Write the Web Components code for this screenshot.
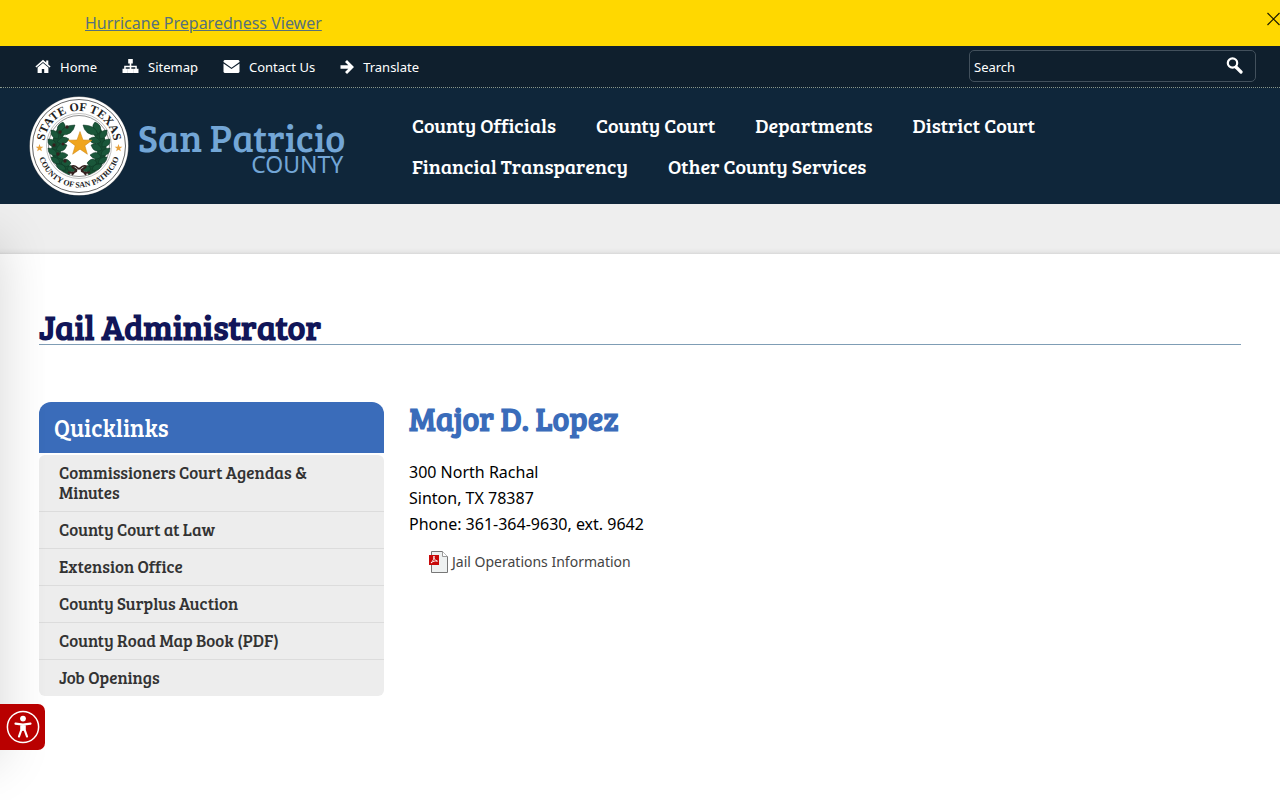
<!DOCTYPE html>
<html lang="en">
<head>
<meta charset="utf-8">
<meta name="viewport" content="width=device-width, initial-scale=1">
<title>Jail Administrator</title>
<style>
  :root {
    --navy: #0f263a;
    --navy-dark: #0f1f2d;
    --blue: #3a6cba;
    --sky: #73a6d6;
    --gray: #ededed;
    --slab: "Bree Serif", "Liberation Serif", serif;
  }
  body {
    margin: 0;
    overflow-x: hidden;
    font: 16px/26px "Segoe UI", "Noto Sans", sans-serif;
    color: #000;
    background: #fff;
  }
</style>
</head>
<body>
<alert-bar href="#viewer">Hurricane Preparedness Viewer</alert-bar>
<utility-bar></utility-bar>
<site-header>
  <nav-link href="#officials">County Officials</nav-link>
  <nav-link href="#court">County Court</nav-link>
  <nav-link href="#departments">Departments</nav-link>
  <nav-link href="#district">District Court</nav-link>
  <nav-link href="#finance">Financial Transparency</nav-link>
  <nav-link href="#services">Other County Services</nav-link>
</site-header>
<page-content>
  <span slot="title">Jail Administrator</span>
  <quick-links slot="side"></quick-links>
  <contact-card name="Major D. Lopez">
    300 North Rachal<br>
    Sinton, TX 78387<br>
    Phone: 361-364-9630, ext. 9642
    <pdf-link slot="files" href="#operations">Jail Operations Information</pdf-link>
  </contact-card>
</page-content>
<access-widget></access-widget>

<script>
class AlertBar extends HTMLElement {
  constructor() {
    super();
    this.attachShadow({ mode: "open" });
  }
  connectedCallback() {
    this.shadowRoot.innerHTML = /*html*/ `
    <style>
      :host {
        display: flex;
        justify-content: space-between;
        align-items: flex-start;
        box-sizing: border-box;
        min-height: 46px;
        padding: 10px 0 10px 85px;
        background: #ffd800;
      }
      a {
        color: #56717b;
      }
      button {
        display: flex;
        padding: 2px 0;
        border: 0;
        background: none;
        cursor: pointer;
      }
    </style>
    <a href="${this.getAttribute("href")}"><slot></slot></a>
    <button type="button" aria-label="Close">
      <svg width="14" height="14" viewBox="0 0 14 14" fill="none" stroke="#1c1a00" stroke-width="1.2">
        <path d="M1.500 1l12 12M13.500 1l-12 12"/>
      </svg>
    </button>
    `;
    this.shadowRoot.querySelector("button")
      .addEventListener("click", () => this.remove());
  }
}
customElements.define("alert-bar", AlertBar);

class UtilityBar extends HTMLElement {
  constructor() {
    super();
    this.attachShadow({ mode: "open" });
  }
  connectedCallback() {
    this.shadowRoot.innerHTML = /*html*/ `
    <style>
      :host {
        display: flex;
        justify-content: space-between;
        align-items: center;
        box-sizing: border-box;
        min-height: 42px;
        padding: 0 24px 0 35px;
        background: var(--navy-dark);
        border-bottom: 1px dotted #87968c;
        color: #fff;
        font-size: 13px;
      }
      nav {
        display: flex;
        gap: 25px;
      }
      a {
        display: flex;
        align-items: center;
        gap: 9px;
        color: inherit;
        text-decoration: none;
      }
      svg {
        display: block;
        fill: #fff;
      }
      form {
        display: flex;
        align-items: center;
        box-sizing: border-box;
        width: 287px;
        height: 32px;
        margin-bottom: 2px;
        padding-right: 12px;
        border: 1px solid #42505c;
        border-radius: 5px;
      }
      input {
        flex: 1;
        min-width: 0;
        padding: 2px 4px 0;
        border: 0;
        outline: 0;
        background: none;
        color: #fff;
        font: inherit;
      }
      input::placeholder {
        color: #fff;
        opacity: 1;
      }
      button {
        padding: 0;
        border: 0;
        background: none;
        cursor: pointer;
      }
    </style>
    <nav aria-label="Utility">
      <a href="#home">
        <svg width="16" height="16" viewBox="0 0 16 16"><path d="M8 .8L.4 7.500l1 1.100L8 3l6.600 5.600 1-1.100L13.300 5.400V1.600h-2.100v2z"/><path d="M8 4L2.600 8.600V14h4.200v-4h2.400v4h4.200V8.600z"/></svg>
        Home</a>
      <a href="#sitemap">
        <svg width="17" height="16" viewBox="0 0 17 16"><path d="M6.200 0h4.600v4.500H9.300v2.200h5.500v3H16.500v4.300h-5.200V9.700h2V8.300h-4v1.400h1.900V14H5.800V9.700h1.900V8.300h-4v1.400h2V14H.5V9.700h1.700v-3h5.500V4.500H6.200z"/></svg>
        Sitemap</a>
      <a href="#contact">
        <svg width="17" height="16" viewBox="0 0 17 16"><path d="M1.500 1h14l1 1v1L8.500 8.800.5 3V2zM.5 4.500l8 5.600 8-5.600V13l-1 1h-14l-1-1z"/></svg>
        Contact Us</a>
      <a href="#translate">
        <svg width="14" height="16" viewBox="0 0 14 16"><path d="M7 1l7 7-7 7-2-2 3.300-3.300H.5V6.300h7.800L5 3z"/></svg>
        Translate</a>
    </nav>
    <form role="search">
      <input type="text" placeholder="Search" aria-label="Search">
      <button type="submit" aria-label="Submit search">
        <svg width="17" height="20" viewBox="0 0 17 20"><g fill="none" stroke="#fff"><circle cx="6.500" cy="7" r="4.700" stroke-width="2.200"/><path d="M10 11l5 5" stroke-width="3.200" stroke-linecap="round"/></g></svg>
      </button>
    </form>
    `;
    this.shadowRoot.querySelector("form")
      .addEventListener("submit", (e) => e.preventDefault());
  }
}
customElements.define("utility-bar", UtilityBar);

class CountySeal extends HTMLElement {
  constructor() {
    super();
    this.attachShadow({ mode: "open" });
  }
  connectedCallback() {
    this.shadowRoot.innerHTML = /*html*/ `
    <style>
      :host {
        display: block;
      }
      svg {
        display: block;
        width: 100px;
        height: 100px;
      }
      text {
        font-family: "Liberation Serif", serif;
        font-weight: bold;
        fill: #222;
      }
    </style>
    <svg viewBox="0 0 100 100" role="img" aria-label="County seal">
      <defs>
        <path id="top" d="M16.200 59A35 35 0 1 1 83.800 59"/>
        <path id="bottom" d="M8.500 50A41.500 41.500 0 0 0 91.500 50"/>
        <path id="star" d="M0-10L2.400-3.200 9.600-3.100 3.900 1.300 5.900 8.200 0 4.100-5.900 8.200-3.900 1.300-9.600-3.100-2.400-3.200z"/>
        <g id="branch">
          <path d="M42 75C26 69 23 50 32 35" fill="none" stroke="#174e32" stroke-width="9"/>
          <g fill="#1a573a" stroke="#0d3322" stroke-width=".5">
            <path d="M30 38q-5-8 4-12 6 6-4 12z"/>
            <path d="M31 39q2-10 15-10-2 11-15 10z"/>
            <path d="M29 43q-8-1-7-9 10 1 7 9z"/>
            <path d="M28 46q5-8 12-3-4 8-12 3z"/>
            <path d="M27 51q-9 0-8-8 9 0 8 8z"/>
            <path d="M27 54q3-9 11-5-3 9-11 5z"/>
            <path d="M28 60q-9 0-9-8 9 0 9 8z"/>
            <path d="M28 61q4-8 11-2-5 7-11 2z"/>
            <path d="M31 68q-8 1-9-7 8-1 9 7z"/>
            <path d="M32 67q4-8 10 0-4 7-10 0z"/>
            <path d="M37 74q-8 2-10-6 9-1 10 6z"/>
            <path d="M38 73q3-7 9 0-3 6-9 0z"/>
          </g>
        </g>
      </defs>
      <circle cx="50" cy="50" r="49.500" fill="#a5a2a0"/>
      <circle cx="50" cy="50" r="48" fill="#fff" stroke="#fff" stroke-width="2"/>
      <circle cx="50" cy="50" r="46.500" fill="#fff" stroke="#666" stroke-width="1"/>
      <circle cx="50" cy="50" r="32.500" fill="none" stroke="#999" stroke-width=".6"/>
      <circle cx="50" cy="50" r="30.500" fill="none" stroke="#777" stroke-width=".8"/>
      <use href="#branch"/>
      <use href="#branch" transform="matrix(-1 0 0 1 100 0)"/>
      <g fill="#35201e">
        <circle cx="31" cy="36" r="1.700"/><circle cx="38" cy="31" r="1.700"/>
        <circle cx="25" cy="49" r="1.700"/><circle cx="34" cy="48" r="1.500"/>
        <circle cx="29" cy="58" r="1.700"/><circle cx="36" cy="65" r="1.700"/>
      </g>
      <path d="M50 73c-7-6-9-2-4 0s-3 5-7 3M50 73c7-6 9-2 4 0s3 5 7 3M48 73l-5 6M52 73l5 6" fill="none" stroke="#35201e" stroke-width="1.800"/>
      <use href="#star" fill="#f0a51e" stroke="#c98313" stroke-width=".4" transform="translate(51 48) scale(1.250)"/>
      <use href="#star" fill="#e8a13a" transform="translate(10.500 52) scale(.4)"/>
      <use href="#star" fill="#e8a13a" transform="translate(89.500 52) scale(.4)"/>
      <text font-size="12"><textPath href="#top" startOffset="50%" text-anchor="middle">STATE OF TEXAS</textPath></text>
      <text font-size="8"><textPath href="#bottom" startOffset="50%" text-anchor="middle">COUNTY OF SAN PATRICIO</textPath></text>
    </svg>
    `;
  }
}
customElements.define("county-seal", CountySeal);

class NavLink extends HTMLElement {
  constructor() {
    super();
    this.attachShadow({ mode: "open" });
  }
  connectedCallback() {
    this.shadowRoot.innerHTML = /*html*/ `
    <style>
      :host {
        display: block;
      }
      a {
        display: block;
        color: #fff;
        font: 20px/41px var(--slab);
        text-decoration: none;
        white-space: nowrap;
      }
      a:hover {
        color: var(--sky);
      }
    </style>
    <a href="${this.getAttribute("href")}"><slot></slot></a>
    `;
  }
}
customElements.define("nav-link", NavLink);

class SiteHeader extends HTMLElement {
  constructor() {
    super();
    this.attachShadow({ mode: "open" });
  }
  connectedCallback() {
    this.shadowRoot.innerHTML = /*html*/ `
    <style>
      :host {
        display: grid;
        grid-template-columns: 316px 1fr;
        gap: 67px;
        align-items: center;
        box-sizing: border-box;
        min-height: 116px;
        padding: 0 24px 0 29px;
        background: var(--navy);
      }
      .brand {
        display: flex;
        align-items: center;
        gap: 9px;
        color: var(--sky);
        text-decoration: none;
      }
      .name {
        display: flex;
        flex-direction: column;
        align-items: flex-end;
        padding-top: 4px;
        white-space: nowrap;
      }
      .county {
        font: 38px/32px var(--slab);
      }
      .kind {
        padding-right: 2px;
        font-size: 23px;
        line-height: 22px;
      }
      nav {
        display: flex;
        flex-wrap: wrap;
        column-gap: 40px;
      }
    </style>
    <a class="brand" href="#home">
      <county-seal></county-seal>
      <span class="name">
        <span class="county">San Patricio</span>
        <span class="kind">COUNTY</span>
      </span>
    </a>
    <nav aria-label="Main"><slot></slot></nav>
    `;
  }
}
customElements.define("site-header", SiteHeader);

class PageContent extends HTMLElement {
  constructor() {
    super();
    this.attachShadow({ mode: "open" });
  }
  connectedCallback() {
    this.shadowRoot.innerHTML = /*html*/ `
    <style>
      :host {
        display: block;
      }
      .banner {
        height: 50px;
        background: linear-gradient(to top, #d8d8d8, #e6e6e6 2px, #eee 6px);
      }
      main {
        padding: 56px 39px;
      }
      h1 {
        margin: 0 0 57px;
        border-bottom: 1px solid #7f9db5;
        color: #111659;
        font: bold 34px/34px var(--slab);
      }
      .columns {
        display: grid;
        grid-template-columns: 345fr 832fr;
        gap: 25px;
        align-items: start;
      }
    </style>
    <div class="banner"></div>
    <main>
      <h1><slot name="title"></slot></h1>
      <div class="columns">
        <slot name="side"></slot>
        <slot></slot>
      </div>
    </main>
    `;
  }
}
customElements.define("page-content", PageContent);

class QuickLinks extends HTMLElement {
  constructor() {
    super();
    this.attachShadow({ mode: "open" });
    this.links = [
      "Commissioners Court Agendas &amp; Minutes",
      "County Court at Law",
      "Extension Office",
      "County Surplus Auction",
      "County Road Map Book (PDF)",
      "Job Openings",
    ];
  }
  connectedCallback() {
    this.shadowRoot.innerHTML = /*html*/ `
    <style>
      :host {
        display: block;
      }
      h2 {
        margin: 0 0 2px;
        padding: 13px 15px 12px;
        border-radius: 12px 12px 0 0;
        background: var(--blue);
        color: #fff;
        font: 24px/26px var(--slab);
      }
      ul {
        margin: 0;
        padding: 0;
        border-radius: 6px;
        background: var(--gray);
        list-style: none;
      }
      li + li {
        border-top: 1px solid #dcdcdc;
      }
      a {
        display: block;
        padding: 8px 60px 8px 20px;
        color: #333;
        font: 17px/20px var(--slab);
        text-decoration: none;
      }
      a:hover {
        text-decoration: underline;
      }
    </style>
    <h2>Quicklinks</h2>
    <ul>
      ${this.links.map((text) => `<li><a href="#link">${text}</a></li>`).join("")}
    </ul>
    `;
  }
}
customElements.define("quick-links", QuickLinks);

class ContactCard extends HTMLElement {
  constructor() {
    super();
    this.attachShadow({ mode: "open" });
  }
  connectedCallback() {
    this.shadowRoot.innerHTML = /*html*/ `
    <style>
      :host {
        display: block;
      }
      h2 {
        margin: 0 0 24px;
        color: var(--blue);
        font: bold 32px/33px var(--slab);
      }
      p {
        margin: 0 0 12px;
      }
    </style>
    <h2>${this.getAttribute("name")}</h2>
    <p><slot></slot></p>
    <slot name="files"></slot>
    `;
  }
}
customElements.define("contact-card", ContactCard);

class PdfLink extends HTMLElement {
  constructor() {
    super();
    this.attachShadow({ mode: "open" });
  }
  connectedCallback() {
    this.shadowRoot.innerHTML = /*html*/ `
    <style>
      :host {
        display: block;
        padding-left: 20px;
      }
      a {
        display: inline-flex;
        align-items: center;
        gap: 4px;
        color: #444;
        font-size: 14px;
        text-decoration: none;
      }
    </style>
    <a href="${this.getAttribute("href")}">
      <svg width="19" height="22" viewBox="0 0 19 22">
        <path d="M2.500.5h11l5 5v16h-16z" fill="#eef1f1" stroke="#777"/>
        <path d="M13.500.5v5h5" fill="#fff" stroke="#999"/>
        <path d="M0 4h10v10H0z" fill="#c80a0a"/>
        <path d="M2 12c2-2 3.500-5 3-7-.8 2 1 4.500 3.500 5.200C6 9.500 4 10.300 2 12z" fill="none" stroke="#fff" stroke-width=".9"/>
      </svg>
      <slot></slot>
    </a>
    `;
  }
}
customElements.define("pdf-link", PdfLink);

// Accessibility button, with the closed options panel waiting off the left edge
class AccessWidget extends HTMLElement {
  constructor() {
    super();
    this.attachShadow({ mode: "open" });
  }
  connectedCallback() {
    this.shadowRoot.innerHTML = /*html*/ `
    <style>
      :host {
        position: fixed;
        left: 0;
        top: 204px;
        bottom: 0;
        width: 45px;
        overflow: hidden;
        pointer-events: none;
      }
      .panel {
        position: absolute;
        top: 36px;
        bottom: 40px;
        right: 100%;
        width: 200px;
        box-shadow: 0 0 50px rgba(0, 0, 0, .16);
      }
      button {
        position: absolute;
        left: 0;
        bottom: 50px;
        display: grid;
        place-items: center;
        width: 45px;
        height: 46px;
        padding: 0;
        border: 0;
        border-radius: 0 7px 7px 0;
        background: #b90000;
        cursor: pointer;
        pointer-events: auto;
      }
    </style>
    <div class="panel"></div>
    <button type="button" aria-label="Accessibility options">
      <svg width="34" height="34" viewBox="0 0 34 34">
        <circle cx="17" cy="17" r="15.600" fill="none" stroke="#fff" stroke-width="1.500"/>
        <circle cx="17" cy="8.600" r="2.900" fill="#fff"/>
        <path d="M9.500 13.700q7.500 1.600 15 0M17 15v5M15.300 15v5l-2.300 6.500M18.700 15v5l2.300 6.500" fill="none" stroke="#fff" stroke-width="2.200" stroke-linecap="round" stroke-linejoin="round"/>
      </svg>
    </button>
    `;
  }
}
customElements.define("access-widget", AccessWidget);
</script>
</body>
</html>
